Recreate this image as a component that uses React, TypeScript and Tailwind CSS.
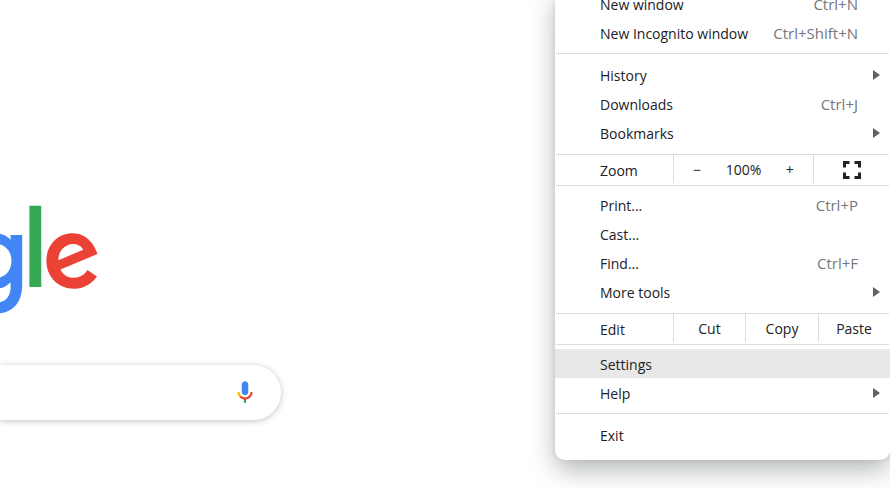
import type { ReactNode } from "react";

type ItemProps = {
  label: string;
  shortcut?: string;
  submenu?: boolean;
  selected?: boolean;
};

function Item({ label, shortcut, submenu = false, selected = false }: ItemProps) {
  return (
    <button
      type="button"
      role="menuitem"
      aria-haspopup={submenu ? "menu" : undefined}
      className={`flex h-[29px] w-full items-center justify-between pt-0.5 pl-[45px] text-left ${
        submenu ? "pr-2.5" : "pr-8"
      } ${selected ? "bg-[#e8e8e8]" : "bg-white"}`}
    >
      <span>{label}</span>
      {shortcut && <span className="pb-px text-[15px] leading-5 text-[#74777b]">{shortcut}</span>}
      {submenu && (
        <svg width="7" height="10" viewBox="0 0 7 10" className="mb-0.5" aria-hidden="true">
          <path d="M0 0 7 5 0 10z" fill="#5f6164" />
        </svg>
      )}
    </button>
  );
}

function Group({ children, className = "" }: { children: ReactNode; className?: string }) {
  return <div role="group" className={className}>{children}</div>;
}

function ControlRow({ label, children }: { label: string; children: ReactNode }) {
  return (
    <div
      role="group"
      aria-label={label}
      className="mx-px flex h-8 border-y border-[#dadce0] bg-white"
    >
      <span className="flex w-[117px] shrink-0 items-center pt-0.5 pl-11">{label}</span>
      {children}
    </div>
  );
}

function Logo() {
  return (
    <svg width="100" height="115" viewBox="192 0 80 92" role="img" aria-label="Google">
      <path
        fill="#4285f4"
        d="M209.75 26.34v39.82c0 16.38-9.66 23.07-21.08 23.07-10.75 0-17.22-7.19-19.66-13.07l8.48-3.53c1.51 3.61 5.21 7.87 11.17 7.87 7.31 0 11.84-4.51 11.84-13v-3.19h-.34c-2.18 2.69-6.38 5.04-11.68 5.04-11.09 0-21.25-9.66-21.25-22.09 0-12.52 10.16-22.26 21.25-22.26 5.29 0 9.49 2.35 11.68 4.96h.34v-3.61h9.25zm-8.56 20.92c0-7.81-5.21-13.52-11.84-13.52-6.72 0-12.35 5.71-12.35 13.52 0 7.73 5.63 13.36 12.35 13.36 6.63 0 11.84-5.63 11.84-13.36z"
      />
      <path fill="#34a853" d="M225 3v65h-9.5V3h9.5z" />
      <path
        fill="#ea4335"
        d="M262.02 54.48l7.56 5.04c-2.44 3.61-8.32 9.83-18.48 9.83-12.6 0-22.01-9.74-22.01-22.18 0-13.19 9.49-22.18 20.92-22.18 11.51 0 17.14 9.16 18.98 14.11l1.01 2.52-29.65 12.28c2.27 4.45 5.8 6.72 10.75 6.72 4.96 0 8.4-2.44 10.92-6.14zm-23.27-7.98l19.82-8.23c-1.09-2.77-4.37-4.7-8.23-4.7-4.95 0-11.84 4.37-11.59 12.93z"
      />
    </svg>
  );
}

function MicIcon() {
  return (
    <svg width="26" height="26" viewBox="0 0 24 24" aria-hidden="true">
      <path fill="#4285f4" d="m12 15c1.66 0 3-1.31 3-2.97v-7.02c0-1.66-1.34-3.01-3-3.01s-3 1.34-3 3.01v7.02c0 1.66 1.34 2.97 3 2.97z" />
      <path fill="#34a853" d="m11 18.08h2v3.92h-2z" />
      <path fill="#fbbc04" d="m7.05 16.87c-1.27-1.33-2.05-2.83-2.05-4.87h2c0 1.45 0.56 2.42 1.47 3.38v0.32l-1.15 1.18z" />
      <path fill="#ea4335" d="m12 16.93a4.97 5.25 0 0 1 -3.54 -1.55l-1.41 1.49c1.26 1.34 3.02 2.13 4.95 2.13 3.87 0 6.99-2.92 6.99-7h-1.99c0 2.92-2.24 4.93-5 4.93z" />
    </svg>
  );
}

function BrowserMenu() {
  return (
    <div
      role="menu"
      aria-label="Browser menu"
      className="absolute -top-[11px] right-0 w-[335px] rounded-[10px] bg-white pb-[11px] text-sm text-[#202124] shadow-[0_10px_26px_rgba(60,70,70,0.38),0_0_5px_rgba(60,70,70,0.12)]"
    >
      <Group className="pb-1.5">
        <Item label="New window" shortcut="Ctrl+N" />
        <Item label="New Incognito window" shortcut="Ctrl+Shift+N" />
      </Group>
      <hr className="mx-px border-[#dadce0]" />
      <Group className="pt-1.5 pb-[7px]">
        <Item label="History" submenu />
        <Item label="Downloads" shortcut="Ctrl+J" />
        <Item label="Bookmarks" submenu />
      </Group>
      <ControlRow label="Zoom">
        <div className="mb-0.5 grid w-[141px] shrink-0 grid-cols-3 items-center border-x border-[#dadce0] pt-0.5 text-center">
          <button type="button" aria-label="Zoom out">−</button>
          <span>100%</span>
          <button type="button" aria-label="Zoom in">+</button>
        </div>
        <button type="button" aria-label="Full screen" className="flex flex-1 items-center justify-center">
          <svg width="18" height="18" viewBox="0 0 18 18" fill="none" stroke="#202124" strokeWidth="3" aria-hidden="true">
            <path d="M1.5 6.5v-5h5M11.5 1.5h5v5M16.5 11.5v5h-5M6.5 16.5h-5v-5" />
          </svg>
        </button>
      </ControlRow>
      <Group className="pt-1 pb-[7px]">
        <Item label="Print..." shortcut="Ctrl+P" />
        <Item label="Cast..." />
        <Item label="Find..." shortcut="Ctrl+F" />
        <Item label="More tools" submenu />
      </Group>
      <ControlRow label="Edit">
        <div className="mb-0.5 grid flex-1 grid-cols-[72px_73px_1fr] divide-x divide-[#dadce0] border-l border-[#dadce0]">
          <button type="button" className="pt-0.5">Cut</button>
          <button type="button" className="pt-0.5">Copy</button>
          <button type="button" className="pt-0.5">Paste</button>
        </div>
      </ControlRow>
      <Group className="pt-1 pb-1.5">
        <Item label="Settings" selected />
        <Item label="Help" submenu />
      </Group>
      <hr className="mx-px border-[#dadce0]" />
      <Group className="pt-1.5">
        <Item label="Exit" />
      </Group>
    </div>
  );
}

export default function App() {
  return (
    <div className="relative min-h-screen overflow-hidden bg-white font-['Open_Sans','Noto_Sans',sans-serif]">
      <main className="flex flex-col items-start gap-12 pt-[202px]">
        <Logo />
        <form
          role="search"
          className="flex h-[55px] w-[281px] items-center rounded-r-full bg-white pr-[23px] shadow-[0_1px_6px_rgba(32,33,36,0.28)]"
        >
          <input type="text" aria-label="Search" className="h-full min-w-0 flex-1 bg-transparent outline-none" />
          <button type="button" aria-label="Search by voice" className="pb-0.5">
            <MicIcon />
          </button>
        </form>
      </main>
      <BrowserMenu />
    </div>
  );
}
